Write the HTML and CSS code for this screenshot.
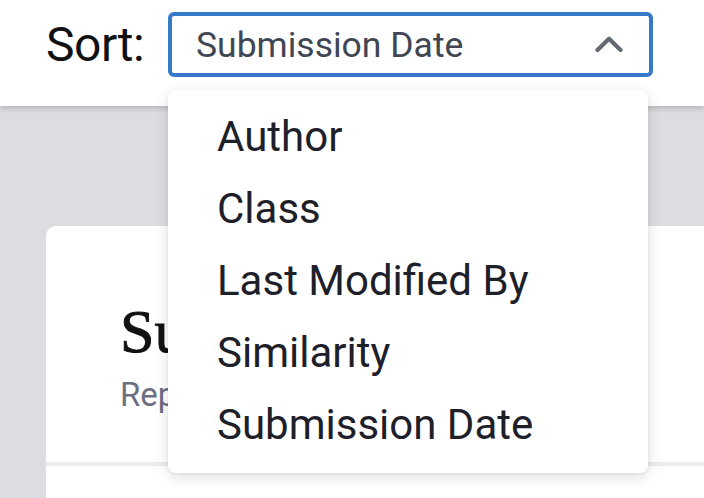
FILE: index.html
```html
<!DOCTYPE html>
<html lang="en">
<head>
<meta charset="utf-8">
<title>Submissions</title>
<link rel="stylesheet" href="styles.css">
</head>
<body>
  <header class="topbar">
    <span class="sort-label">Sort:</span>
    <div class="select-wrap">
      <div class="select">
        <span class="select-value">Submission Date</span>
        <svg class="chevron" width="28" height="16" viewBox="0 0 28 16" aria-hidden="true">
          <polyline points="2.5,14 14,2.8 25.5,14" fill="none" stroke="currentColor" stroke-width="4.2" stroke-linecap="round" stroke-linejoin="round"/>
        </svg>
      </div>
      <ul class="menu">
        <li class="menu-item">Author</li>
        <li class="menu-item">Class</li>
        <li class="menu-item">Last Modified By</li>
        <li class="menu-item">Similarity</li>
        <li class="menu-item">Submission Date</li>
      </ul>
    </div>
  </header>
  <main class="content">
    <section class="card">
      <div class="card-head">
        <h1 class="card-title">Submissions</h1>
        <p class="card-sub">Reports</p>
      </div>
      <div class="card-body"></div>
    </section>
  </main>
</body>
</html>
```
FILE: styles.css
```css
html, body {
  margin: 0;
  padding: 0;
}
body {
  width: 704px;
  height: 498px;
  overflow: hidden;
  background: #dcdde1;
  font-family: Roboto, "Noto Sans", sans-serif;
}
.topbar {
  position: relative;
  z-index: 2;
  height: 106px;
  box-sizing: border-box;
  background: #ffffff;
  box-shadow: 0 2px 6px rgba(0, 0, 0, 0.2);
  display: flex;
  align-items: flex-start;
  padding: 12px 0 0 46px;
}
.sort-label {
  height: 65px;
  display: flex;
  align-items: center;
  font-size: 48px;
  color: #111111;
  width: 122px;
  letter-spacing: -0.5px;
}
.select-wrap {
  position: relative;
}
.select {
  width: 485px;
  height: 65px;
  box-sizing: border-box;
  border: 4px solid #377bc8;
  border-radius: 6px;
  display: flex;
  align-items: center;
  justify-content: space-between;
  padding: 1px 26px 0 24px;
  background: #ffffff;
}
.select-value {
  font-size: 35.5px;
  color: #404654;
}
.chevron {
  color: #636873;
  display: block;
  margin-top: -3px;
}
.menu {
  position: absolute;
  left: 0;
  top: 78px;
  width: 480px;
  margin: 0;
  padding: 11px 0 12px;
  list-style: none;
  background: #ffffff;
  border-radius: 8px;
  box-shadow: 0 4px 14px rgba(0, 0, 0, 0.13), 0 1px 3px rgba(0, 0, 0, 0.06);
}
.menu-item {
  height: 72px;
  line-height: 72px;
  padding-left: 49px;
  font-size: 42px;
  color: #1e2029;
  white-space: nowrap;
}
.content {
  padding: 120px 0 0 46px;
}
.card {
  width: 720px;
  background: #ffffff;
  border-radius: 10px 10px 0 0;
  min-height: 300px;
}
.card-head {
  padding: 76px 74px 48px;
  border-bottom: 4px solid #ebecef;
}
.card-title {
  margin: 0;
  font-family: "Liberation Serif", serif;
  font-weight: normal;
  font-size: 62px;
  line-height: 59px;
  color: #111111;
  white-space: nowrap;
  -webkit-text-stroke: 0.9px #111111;
}
.card-sub {
  margin: 14px 0 0;
  font-size: 33px;
  color: #6b7080;
  white-space: nowrap;
}
.card-body {
  height: 200px;
}
```
